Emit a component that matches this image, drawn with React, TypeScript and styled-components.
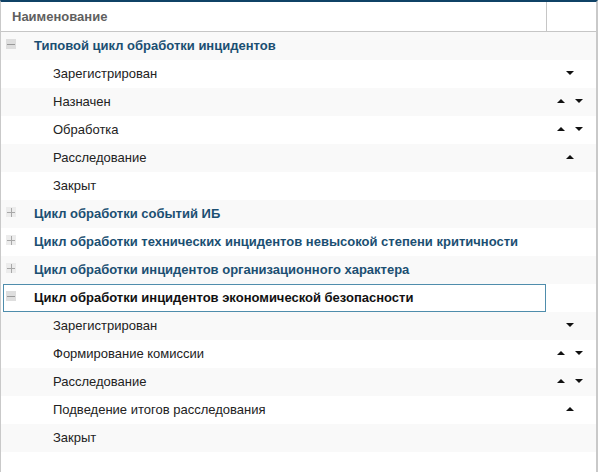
import React from "react";
import styled, { createGlobalStyle } from "styled-components";

const GlobalStyle = createGlobalStyle`
  html, body {
    margin: 0;
    padding: 0;
    background: #fff;
  }
  body {
    font-family: "Liberation Sans", Arial, sans-serif;
    font-size: 13px;
  }
`;

type Move = "up" | "down" | "both" | "none";

type Stage = {
  name: string;
  move: Move;
};

type Cycle = {
  title: string;
  expanded: boolean;
  selected?: boolean;
  stages: Stage[];
};

const stages1: Stage[] = [
  { name: "Зарегистрирован", move: "down" },
  { name: "Назначен", move: "both" },
  { name: "Обработка", move: "both" },
  { name: "Расследование", move: "up" },
  { name: "Закрыт", move: "none" },
];

const stages2: Stage[] = [
  { name: "Зарегистрирован", move: "down" },
  { name: "Формирование комиссии", move: "both" },
  { name: "Расследование", move: "both" },
  { name: "Подведение итогов расследования", move: "up" },
  { name: "Закрыт", move: "none" },
];

const cycles: Cycle[] = [
  { title: "Типовой цикл обработки инцидентов", expanded: true, stages: stages1 },
  { title: "Цикл обработки событий ИБ", expanded: false, stages: [] },
  {
    title: "Цикл обработки технических инцидентов невысокой степени критичности",
    expanded: false,
    stages: [],
  },
  { title: "Цикл обработки инцидентов организационного характера", expanded: false, stages: [] },
  {
    title: "Цикл обработки инцидентов экономической безопасности",
    expanded: true,
    selected: true,
    stages: stages2,
  },
];

const Grid = styled.div`
  width: 598px;
  height: 472px;
  box-sizing: border-box;
  border-top: 2px solid #0f4266;
  border-left: 1px solid #c9c9c9;
  border-right: 2px solid #c9c9c9;
  overflow: hidden;
  display: flex;
  flex-direction: column;
`;

const Header = styled.div`
  display: flex;
  height: 29px;
  border-bottom: 1px solid #c6c6c6;
`;

const HeaderCell = styled.div`
  flex: 1;
  display: flex;
  align-items: center;
  padding-left: 11px;
  color: #5f5f5f;
  font-weight: 700;
  font-size: 13px;
`;

const HeaderSpare = styled.div`
  width: 49px;
  border-left: 1px solid #c6c6c6;
`;

const Row = styled.div<{ $odd: boolean }>`
  height: 28px;
  box-sizing: border-box;
  padding-bottom: 2px;
  display: flex;
  align-items: center;
  background: ${(p) => (p.$odd ? "#f9f9f9" : "#fff")};
`;

const GroupCell = styled.div<{ $selected?: boolean }>`
  width: 543px;
  height: 28px;
  box-sizing: border-box;
  margin-left: 2px;
  margin-bottom: -2px;
  padding-bottom: 2px;
  display: flex;
  align-items: center;
  border: 1px solid ${(p) => (p.$selected ? "#4f8dac" : "transparent")};
  background: ${(p) => (p.$selected ? "#fff" : "transparent")};
  padding-left: 2px;
`;

const Toggle = styled.span<{ $open: boolean }>`
  width: 10px;
  height: 10px;
  margin-right: 18px;
  position: relative;
  background: ${(p) => (p.$open ? "#dedede" : "#ececec")};
  flex-shrink: 0;
  margin-top: -3px;

  &::before,
  &::after {
    content: "";
    position: absolute;
    background: ${(p) => (p.$open ? "#999" : "#a8a8a8")};
  }
  &::before {
    left: 1px;
    right: 1px;
    top: 5px;
    height: 1px;
  }
  &::after {
    display: ${(p) => (p.$open ? "none" : "block")};
    top: 1px;
    bottom: 0;
    left: 5px;
    width: 1px;
  }
`;

const GroupTitle = styled.span<{ $selected?: boolean }>`
  font-weight: 700;
  color: ${(p) => (p.$selected ? "#111" : "#1b4f72")};
  white-space: nowrap;
`;

const StageName = styled.span`
  flex: 1;
  padding-left: 52px;
  color: #222;
  white-space: nowrap;
`;

const Moves = styled.div<{ $single?: boolean }>`
  width: 26px;
  margin-right: 13px;
  display: flex;
  align-items: center;
  justify-content: ${(p) => (p.$single ? "center" : "space-between")};
  height: 100%;
`;

const Arrow = styled.span<{ $dir: "up" | "down" }>`
  width: 0;
  height: 0;
  border-left: 4px solid transparent;
  border-right: 4px solid transparent;
  ${(p) =>
    p.$dir === "up"
      ? "border-bottom: 4px solid #111;"
      : "border-top: 4px solid #111;"}
`;

const MoveButtons = ({ move }: { move: Move }) => {
  if (move === "none") return <Moves />;
  if (move === "down" || move === "up")
    return (
      <Moves $single>
        <Arrow $dir={move} />
      </Moves>
    );
  return (
    <Moves>
      <Arrow $dir="up" />
      <Arrow $dir="down" />
    </Moves>
  );
};

const App = () => {
  let index = 0;
  const rows: React.ReactNode[] = [];

  cycles.forEach((cycle) => {
    rows.push(
      <Row key={`c${index}`} $odd={index % 2 === 0}>
        <GroupCell $selected={cycle.selected}>
          <Toggle $open={cycle.expanded} />
          <GroupTitle $selected={cycle.selected}>{cycle.title}</GroupTitle>
        </GroupCell>
      </Row>
    );
    index++;
    if (cycle.expanded) {
      cycle.stages.forEach((stage) => {
        rows.push(
          <Row key={`s${index}`} $odd={index % 2 === 0}>
            <StageName>{stage.name}</StageName>
            <MoveButtons move={stage.move} />
          </Row>
        );
        index++;
      });
    }
  });

  return (
    <>
      <GlobalStyle />
      <Grid>
        <Header>
          <HeaderCell>Наименование</HeaderCell>
          <HeaderSpare />
        </Header>
        {rows}
      </Grid>
    </>
  );
};

export default App;
